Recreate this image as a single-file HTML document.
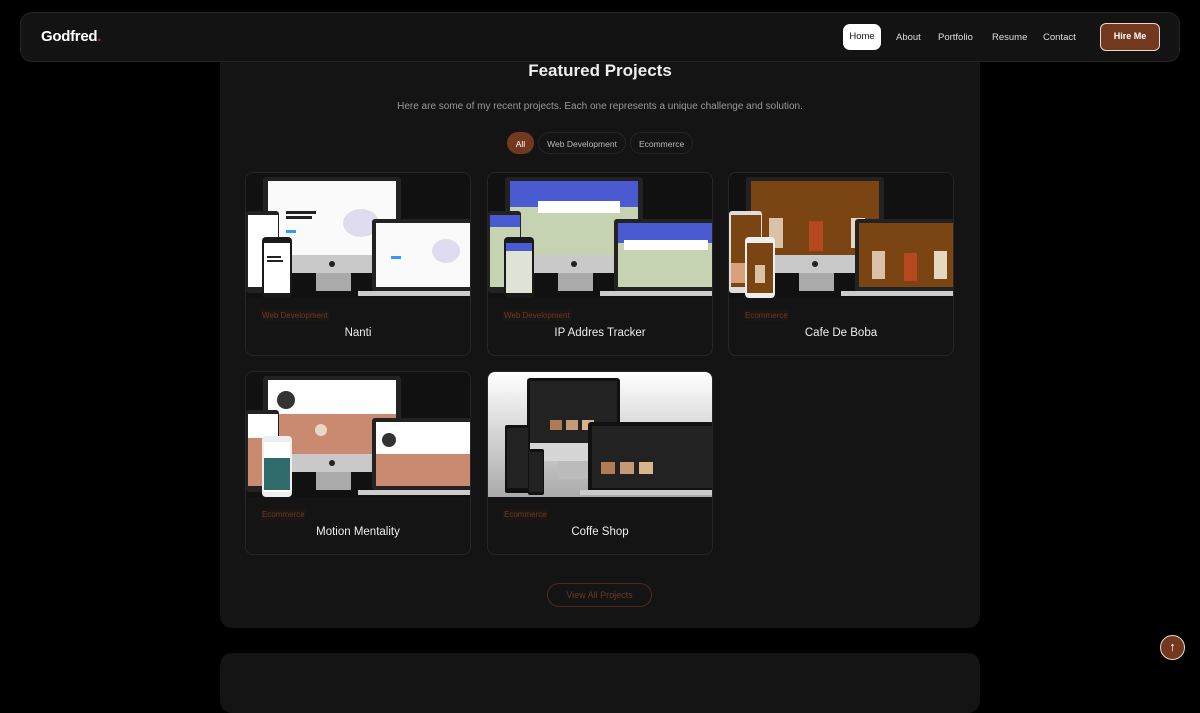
<!DOCTYPE html>
<html><head><meta charset="utf-8">
<style>
*{margin:0;padding:0;box-sizing:border-box}
body{width:1200px;height:675px;background:#000;font-family:"Liberation Sans",sans-serif;overflow:hidden;position:relative;color:#fff}
.nav{position:absolute;left:20px;top:12px;width:1160px;height:50px;background:#131313;border:1px solid #242424;border-radius:12px;z-index:5}
.logo{position:absolute;left:20px;top:15px;font-size:15px;font-weight:bold;letter-spacing:-.3px}
.logo span{color:#7a3e25}
.nav a{position:absolute;top:19px;color:#ddd;font-size:9.5px;text-decoration:none}
.nav a.home{top:11px;left:822px;width:38px;height:26px;background:#fff;color:#111;border-radius:7px;text-align:center;line-height:26px}
.hire{position:absolute;left:1079px;top:10px;width:60px;height:28px;background:#73391f;border:1.5px solid #e8d8d0;border-radius:6px;font-weight:bold;font-size:9px;color:#fff;text-align:center;line-height:25px}
.sec{position:absolute;left:220px;top:40px;width:760px;height:588px;background:#141414;border-radius:12px}
.sec2{position:absolute;left:220px;top:653px;width:760px;height:60px;background:#141414;border-radius:12px}
h2{position:absolute;top:21px;width:100%;text-align:center;font-size:17px;font-weight:bold;color:#eee}
.sub{position:absolute;top:61px;width:100%;text-align:center;font-size:10px;color:#999}
.filters{position:absolute;top:92px;left:0;width:100%;display:flex;justify-content:center;gap:4px;font-size:8.5px}
.filters div{border:1px solid #252525;border-radius:11px;padding:6px 8px;color:#bbb;height:22px}
.filters .on{background:#73391f;border-color:#73391f;color:#fff}
.card{position:absolute;width:226px;height:184px;border:1px solid #262626;border-radius:8px;background:#141414;overflow:hidden}
.card svg{display:block}
.tag{position:absolute;left:15px;top:137px;font-size:8px;color:#6b3a25;background:#1b1614;padding:1px 1px}
.title{position:absolute;top:154px;width:100%;text-align:center;font-size:11.5px;color:#eee}
.btn{position:absolute;left:327px;top:543px;width:105px;height:24px;border:1px solid #4d2a1c;border-radius:12px;color:#6b3a25;font-size:9px;text-align:center;line-height:22px}
.up{position:absolute;left:1160px;top:635px;width:25px;height:25px;border-radius:50%;background:#73391f;border:1.5px solid #e8d8d0;color:#fff;text-align:center;font-size:13px;line-height:21px}
</style></head><body>
<div class="nav"><div class="logo">Godfred<span>.</span></div>
<a class="home">Home</a><a style="left:875px">About</a><a style="left:917px">Portfolio</a><a style="left:971px">Resume</a><a style="left:1022px">Contact</a><div class="hire">Hire Me</div></div>
<div class="sec">
<h2>Featured Projects</h2>
<div class="sub">Here are some of my recent projects. Each one represents a unique challenge and solution.</div>
<div class="filters"><div class="on">All</div><div>Web Development</div><div>Ecommerce</div></div>

<div class="card" style="left:25px;top:132px">
<svg width="226" height="125" viewBox="0 0 226 125"><rect width="226" height="125" fill="#111"/>
<rect x="17" y="4" width="138" height="96" rx="3" fill="#222"/><rect x="22" y="8" width="128" height="74" fill="#fafafa"/><rect x="17" y="82" width="138" height="18" fill="#c9c9c9"/><rect x="70" y="100" width="35" height="18" fill="#aaa"/><circle cx="86" cy="91" r="3" fill="#222"/>
<rect x="40" y="38" width="30" height="3" fill="#222"/><rect x="40" y="43" width="26" height="3" fill="#222"/><rect x="40" y="57" width="10" height="3" fill="#39f"/><ellipse cx="115" cy="50" rx="18" ry="14" fill="#e0dcf0"/>
<rect x="0" y="38" width="33" height="82" rx="3" fill="#222"/><rect x="2" y="42" width="30" height="72" fill="#fff"/>
<rect x="126" y="46" width="100" height="72" rx="3" fill="#222"/><rect x="130" y="50" width="96" height="64" fill="#fafafa"/><rect x="112" y="118" width="114" height="5" fill="#ccc"/><ellipse cx="200" cy="78" rx="14" ry="12" fill="#e0dcf0"/><rect x="145" y="83" width="10" height="3" fill="#39f"/>
<rect x="16" y="64" width="30" height="61" rx="4" fill="#1a1a1a"/><rect x="18" y="70" width="26" height="50" fill="#fff"/><rect x="21" y="83" width="14" height="2" fill="#222"/><rect x="21" y="87" width="16" height="2" fill="#222"/>
</svg><div class="tag">Web Development</div><div class="title">Nanti</div></div>

<div class="card" style="left:267px;top:132px">
<svg width="226" height="125" viewBox="0 0 226 125"><rect width="226" height="125" fill="#111"/>
<rect x="17" y="4" width="138" height="96" rx="3" fill="#222"/><rect x="22" y="8" width="128" height="74" fill="#c6d3b3"/><rect x="22" y="8" width="128" height="26" fill="#4a5ad0"/><rect x="50" y="28" width="82" height="12" fill="#fff"/><rect x="17" y="82" width="138" height="18" fill="#c9c9c9"/><rect x="70" y="100" width="35" height="18" fill="#aaa"/><circle cx="86" cy="91" r="3" fill="#222"/>
<rect x="0" y="38" width="33" height="82" rx="3" fill="#222"/><rect x="2" y="42" width="30" height="72" fill="#c6d3b3"/><rect x="2" y="42" width="30" height="12" fill="#4a5ad0"/>
<rect x="126" y="46" width="100" height="72" rx="3" fill="#222"/><rect x="130" y="50" width="96" height="64" fill="#c6d3b3"/><rect x="130" y="50" width="96" height="20" fill="#4a5ad0"/><rect x="136" y="67" width="84" height="10" fill="#fff"/><rect x="112" y="118" width="114" height="5" fill="#ccc"/>
<rect x="16" y="64" width="30" height="61" rx="4" fill="#1a1a1a"/><rect x="18" y="70" width="26" height="50" fill="#dfe3d5"/><rect x="18" y="70" width="26" height="8" fill="#4a5ad0"/>
</svg><div class="tag">Web Development</div><div class="title">IP Addres Tracker</div></div>

<div class="card" style="left:508px;top:132px">
<svg width="226" height="125" viewBox="0 0 226 125"><rect width="226" height="125" fill="#111"/>
<rect x="17" y="4" width="138" height="96" rx="3" fill="#222"/><rect x="22" y="8" width="128" height="74" fill="#7a4512"/><rect x="17" y="82" width="138" height="18" fill="#c9c9c9"/><rect x="70" y="100" width="35" height="18" fill="#aaa"/><circle cx="86" cy="91" r="3" fill="#222"/>
<rect x="40" y="45" width="14" height="30" fill="#d9c2a8"/><rect x="80" y="48" width="14" height="30" fill="#b5481e"/><rect x="122" y="45" width="14" height="30" fill="#e6d7c0"/>
<rect x="0" y="38" width="33" height="82" rx="3" fill="#ddd"/><rect x="2" y="42" width="30" height="72" fill="#7a4512"/><rect x="2" y="90" width="30" height="20" fill="#d9a07a"/>
<rect x="126" y="46" width="100" height="72" rx="3" fill="#222"/><rect x="130" y="50" width="96" height="64" fill="#7a4512"/><rect x="143" y="78" width="13" height="28" fill="#d9c2a8"/><rect x="175" y="80" width="13" height="28" fill="#b5481e"/><rect x="205" y="78" width="13" height="28" fill="#e6d7c0"/><rect x="112" y="118" width="114" height="5" fill="#ccc"/>
<rect x="16" y="64" width="30" height="61" rx="4" fill="#eee"/><rect x="18" y="70" width="26" height="50" fill="#7a4512"/><rect x="26" y="92" width="10" height="18" fill="#d9c2a8"/>
</svg><div class="tag">Ecommerce</div><div class="title">Cafe De Boba</div></div>

<div class="card" style="left:25px;top:331px">
<svg width="226" height="125" viewBox="0 0 226 125"><rect width="226" height="125" fill="#111"/>
<rect x="17" y="4" width="138" height="96" rx="3" fill="#222"/><rect x="22" y="8" width="128" height="74" fill="#c98a70"/><rect x="22" y="8" width="128" height="34" fill="#fff"/><circle cx="40" cy="28" r="9" fill="#333"/><circle cx="75" cy="58" r="6" fill="#e8d6c6"/><rect x="17" y="82" width="138" height="18" fill="#c9c9c9"/><rect x="70" y="100" width="35" height="18" fill="#aaa"/><circle cx="86" cy="91" r="3" fill="#222"/>
<rect x="0" y="38" width="33" height="82" rx="3" fill="#222"/><rect x="2" y="42" width="30" height="72" fill="#c98a70"/><rect x="2" y="42" width="30" height="24" fill="#fff"/>
<rect x="126" y="46" width="100" height="72" rx="3" fill="#222"/><rect x="130" y="50" width="96" height="64" fill="#c98a70"/><rect x="130" y="50" width="96" height="32" fill="#fff"/><circle cx="143" cy="68" r="7" fill="#333"/><rect x="112" y="118" width="114" height="5" fill="#ccc"/>
<rect x="16" y="64" width="30" height="61" rx="4" fill="#eee"/><rect x="18" y="70" width="26" height="50" fill="#fff"/><rect x="18" y="86" width="26" height="32" fill="#2f6b6a"/>
</svg><div class="tag">Ecommerce</div><div class="title">Motion Mentality</div></div>

<div class="card" style="left:267px;top:331px">
<svg width="226" height="125" viewBox="0 0 226 125"><defs><linearGradient id="g" x1="0" y1="0" x2="0" y2="1"><stop offset="0" stop-color="#fff"/><stop offset="1" stop-color="#aaa"/></linearGradient></defs><rect width="226" height="125" fill="url(#g)"/>
<rect x="39" y="6" width="93" height="82" rx="3" fill="#111"/><rect x="42" y="9" width="87" height="62" fill="#222"/><rect x="39" y="71" width="93" height="18" fill="#d6d6d6"/><rect x="70" y="89" width="30" height="18" fill="#bbb"/><rect x="62" y="48" width="12" height="10" fill="#b07a55"/><rect x="78" y="48" width="12" height="10" fill="#c49a78"/><rect x="94" y="48" width="12" height="10" fill="#d8b48c"/>
<rect x="17" y="53" width="25" height="68" rx="2" fill="#111"/><rect x="19" y="56" width="21" height="60" fill="#222"/>
<rect x="100" y="50" width="126" height="73" rx="3" fill="#111"/><rect x="104" y="54" width="122" height="62" fill="#222"/><rect x="113" y="90" width="14" height="12" fill="#b07a55"/><rect x="132" y="90" width="14" height="12" fill="#c49a78"/><rect x="151" y="90" width="14" height="12" fill="#d8b48c"/><rect x="92" y="118" width="134" height="5" fill="#ccc"/>
<rect x="40" y="77" width="16" height="46" rx="2" fill="#111"/><rect x="41" y="80" width="14" height="40" fill="#222"/>
</svg><div class="tag">Ecommerce</div><div class="title">Coffe Shop</div></div>

<div class="btn">View All Projects</div>
</div>
<div class="sec2"></div>
<div class="up">↑</div>
</body></html>
